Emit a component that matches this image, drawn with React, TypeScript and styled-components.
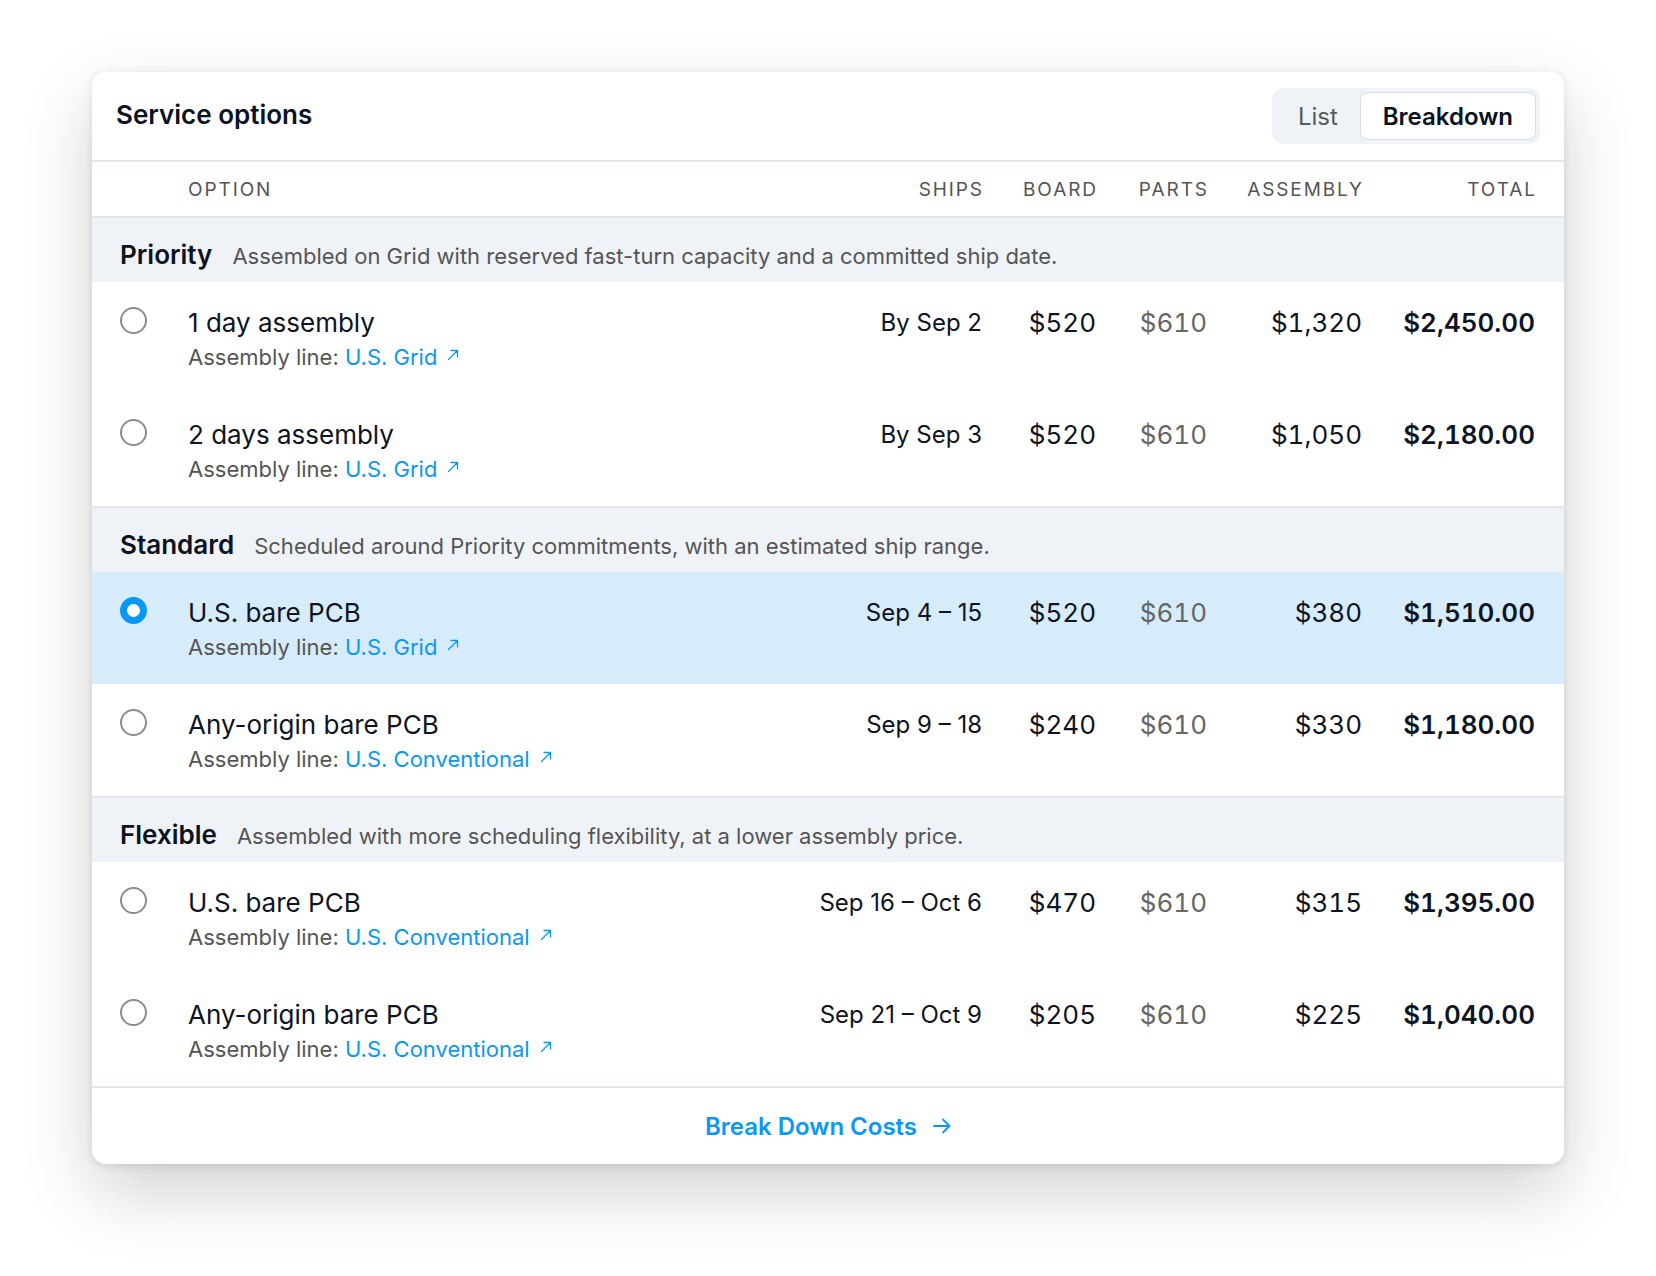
import { useState } from 'react'
import styled, { createGlobalStyle } from 'styled-components'

type Option = {
    id: string
    name: string
    line: string
    ships: string
    board: string
    parts: string
    assembly: string
    total: string
}

type Group = {
    name: string
    desc: string
    rows: Option[]
}

const groups: Group[] = [
    {
        name: 'Priority',
        desc: 'Assembled on Grid with reserved fast-turn capacity and a committed ship date.',
        rows: [
            { id: 'p1', name: '1 day assembly', line: 'U.S. Grid', ships: 'By Sep 2', board: '$520', parts: '$610', assembly: '$1,320', total: '$2,450.00' },
            { id: 'p2', name: '2 days assembly', line: 'U.S. Grid', ships: 'By Sep 3', board: '$520', parts: '$610', assembly: '$1,050', total: '$2,180.00' },
        ],
    },
    {
        name: 'Standard',
        desc: 'Scheduled around Priority commitments, with an estimated ship range.',
        rows: [
            { id: 's1', name: 'U.S. bare PCB', line: 'U.S. Grid', ships: 'Sep 4 – 15', board: '$520', parts: '$610', assembly: '$380', total: '$1,510.00' },
            { id: 's2', name: 'Any-origin bare PCB', line: 'U.S. Conventional', ships: 'Sep 9 – 18', board: '$240', parts: '$610', assembly: '$330', total: '$1,180.00' },
        ],
    },
    {
        name: 'Flexible',
        desc: 'Assembled with more scheduling flexibility, at a lower assembly price.',
        rows: [
            { id: 'f1', name: 'U.S. bare PCB', line: 'U.S. Conventional', ships: 'Sep 16 – Oct 6', board: '$470', parts: '$610', assembly: '$315', total: '$1,395.00' },
            { id: 'f2', name: 'Any-origin bare PCB', line: 'U.S. Conventional', ships: 'Sep 21 – Oct 9', board: '$205', parts: '$610', assembly: '$225', total: '$1,040.00' },
        ],
    },
]

const GlobalStyle = createGlobalStyle`
    body {
        margin: 0;
        background: #ffffff;
        font-family: Inter, "Noto Sans", "Liberation Sans", sans-serif;
        color: #0e1422;
    }
`

const ExternalIcon = () => (
    <svg width="14" height="14" viewBox="0 0 14 14" fill="none">
        <path d="M2.5 11.5L11.5 2.5M5 2.5h6.5V9" stroke="currentColor" strokeWidth="1.3" strokeLinecap="round" strokeLinejoin="round" />
    </svg>
)

const ArrowIcon = () => (
    <svg width="18" height="16" viewBox="0 0 18 16" fill="none">
        <path d="M1 8h15.5M10 1.5L16.5 8 10 14.5" stroke="currentColor" strokeWidth="1.8" strokeLinecap="round" strokeLinejoin="round" />
    </svg>
)

export default function App() {
    const [selected, setSelected] = useState('s1')
    const [view, setView] = useState('breakdown')

    return (
        <Page>
            <GlobalStyle />
            <Card>
                <TitleBar>
                    <Title>Service options</Title>
                    <Toggle>
                        <ToggleButton $active={view === 'list'} onClick={() => setView('list')}>
                            List
                        </ToggleButton>
                        <ToggleButton $active={view === 'breakdown'} onClick={() => setView('breakdown')}>
                            Breakdown
                        </ToggleButton>
                    </Toggle>
                </TitleBar>

                <HeadRow>
                    <span />
                    <HeadCell $left>Option</HeadCell>
                    <HeadCell>Ships</HeadCell>
                    <HeadCell>Board</HeadCell>
                    <HeadCell>Parts</HeadCell>
                    <HeadCell>Assembly</HeadCell>
                    <HeadCell>Total</HeadCell>
                </HeadRow>

                {groups.map((group) => (
                    <GroupBox key={group.name}>
                        <Band>
                            <BandName>{group.name}</BandName>
                            <BandDesc>{group.desc}</BandDesc>
                        </Band>
                        {group.rows.map((row) => (
                            <Row
                                key={row.id}
                                $selected={selected === row.id}
                                onClick={() => setSelected(row.id)}
                            >
                                <Radio $checked={selected === row.id} />
                                <OptionCell>
                                    <OptionName>{row.name}</OptionName>
                                    <SubLine>
                                        Assembly line: <LineLink>{row.line}<ExternalIcon /></LineLink>
                                    </SubLine>
                                </OptionCell>
                                <Ships>{row.ships}</Ships>
                                <Price>{row.board}</Price>
                                <Price $muted>{row.parts}</Price>
                                <Price>{row.assembly}</Price>
                                <Price $bold>{row.total}</Price>
                            </Row>
                        ))}
                    </GroupBox>
                ))}

                <Footer>
                    <FooterLink>
                        Break Down Costs
                        <ArrowIcon />
                    </FooterLink>
                </Footer>
            </Card>
        </Page>
    )
}

const columns = '68px 1fr 200px 114px 111px 155px 173px'

const Page = styled.div`
    padding: 72px 92px 112px;
`

const Card = styled.div`
    background: #ffffff;
    border-radius: 14px;
    overflow: hidden;
    box-shadow: 0 2px 8px rgba(0, 0, 0, 0.1), 0 28px 70px rgba(0, 0, 0, 0.18);
`

const TitleBar = styled.div`
    display: flex;
    align-items: center;
    justify-content: space-between;
    height: 90px;
    padding: 0 24px;
    box-sizing: border-box;
    border-bottom: 2px solid #e4e6eb;
`

const Title = styled.h2`
    margin: 0 0 3px;
    font-size: 26px;
    font-weight: 600;
    color: #0b1220;
`

const Toggle = styled.div`
    display: flex;
    padding: 4px;
    background: #eff2f7;
    border-radius: 11px;
`

const ToggleButton = styled.button<{ $active?: boolean }>`
    height: 48px;
    padding: 0 ${(p) => (p.$active ? '22px' : '21px')};
    font-family: inherit;
    font-size: 24px;
    font-weight: ${(p) => (p.$active ? 600 : 400)};
    color: ${(p) => (p.$active ? '#0b1220' : '#555a61')};
    background: ${(p) => (p.$active ? '#ffffff' : 'transparent')};
    border: 1.5px solid ${(p) => (p.$active ? '#d8dbe1' : 'transparent')};
    border-radius: 8px;
    cursor: pointer;
`

const HeadRow = styled.div`
    display: grid;
    grid-template-columns: ${columns};
    align-items: center;
    height: 56px;
    padding: 0 29px 0 28px;
    box-sizing: border-box;
    border-bottom: 2px solid #e4e6eb;
`

const HeadCell = styled.span<{ $left?: boolean }>`
    font-size: 19px;
    letter-spacing: 0.1em;
    text-transform: uppercase;
    color: #555555;
    text-align: ${(p) => (p.$left ? 'left' : 'right')};
    margin-right: ${(p) => (p.$left ? '0' : '-0.1em')};
`

const GroupBox = styled.section`
    border-bottom: 2px solid #e4e6eb;
`

const Band = styled.div`
    display: flex;
    align-items: baseline;
    gap: 20px;
    height: 64px;
    padding: 21px 28px 0;
    box-sizing: border-box;
    background: #eff3f8;
`

const BandName = styled.span`
    font-size: 26px;
    line-height: 32px;
    font-weight: 600;
    color: #0b1220;
`

const BandDesc = styled.span`
    font-size: 22px;
    color: #555555;
`

const Row = styled.div<{ $selected?: boolean }>`
    display: grid;
    grid-template-columns: ${columns};
    align-items: start;
    height: 112px;
    padding: 25px 29px 0 28px;
    box-sizing: border-box;
    background: ${(p) => (p.$selected ? '#d6ecfb' : '#ffffff')};
    cursor: pointer;
`

const Radio = styled.span<{ $checked?: boolean }>`
    display: block;
    width: 27px;
    height: 27px;
    box-sizing: border-box;
    border-radius: 50%;
    background: #ffffff;
    border: ${(p) => (p.$checked ? '7.5px solid #0a98f7' : '2px solid #8c8c8c')};
`

const OptionCell = styled.div`
    display: flex;
    flex-direction: column;
    gap: 3px;
`

const OptionName = styled.span`
    font-size: 26px;
    line-height: 32px;
    color: #0e1422;
`

const SubLine = styled.span`
    font-size: 22px;
    line-height: 30px;
    color: #555555;
`

const LineLink = styled.a`
    display: inline-flex;
    align-items: center;
    gap: 9px;
    color: #0a98f0;
    text-decoration: none;
    cursor: pointer;

    svg {
        margin-top: -4px;
    }
`

const Ships = styled.span`
    font-size: 24px;
    line-height: 32px;
    text-align: right;
    color: #0e1422;
`

const Price = styled.span<{ $muted?: boolean; $bold?: boolean }>`
    font-size: 26px;
    line-height: 32px;
    text-align: right;
    font-variant-numeric: tabular-nums;
    font-weight: ${(p) => (p.$bold ? 600 : 400)};
    color: ${(p) => (p.$muted ? '#666666' : '#0e1422')};
`

const Footer = styled.div`
    display: flex;
    align-items: center;
    justify-content: center;
    height: 76px;
`

const FooterLink = styled.a`
    display: inline-flex;
    align-items: center;
    gap: 16px;
    font-size: 24px;
    font-weight: 600;
    color: #0a98f5;
    cursor: pointer;
`
